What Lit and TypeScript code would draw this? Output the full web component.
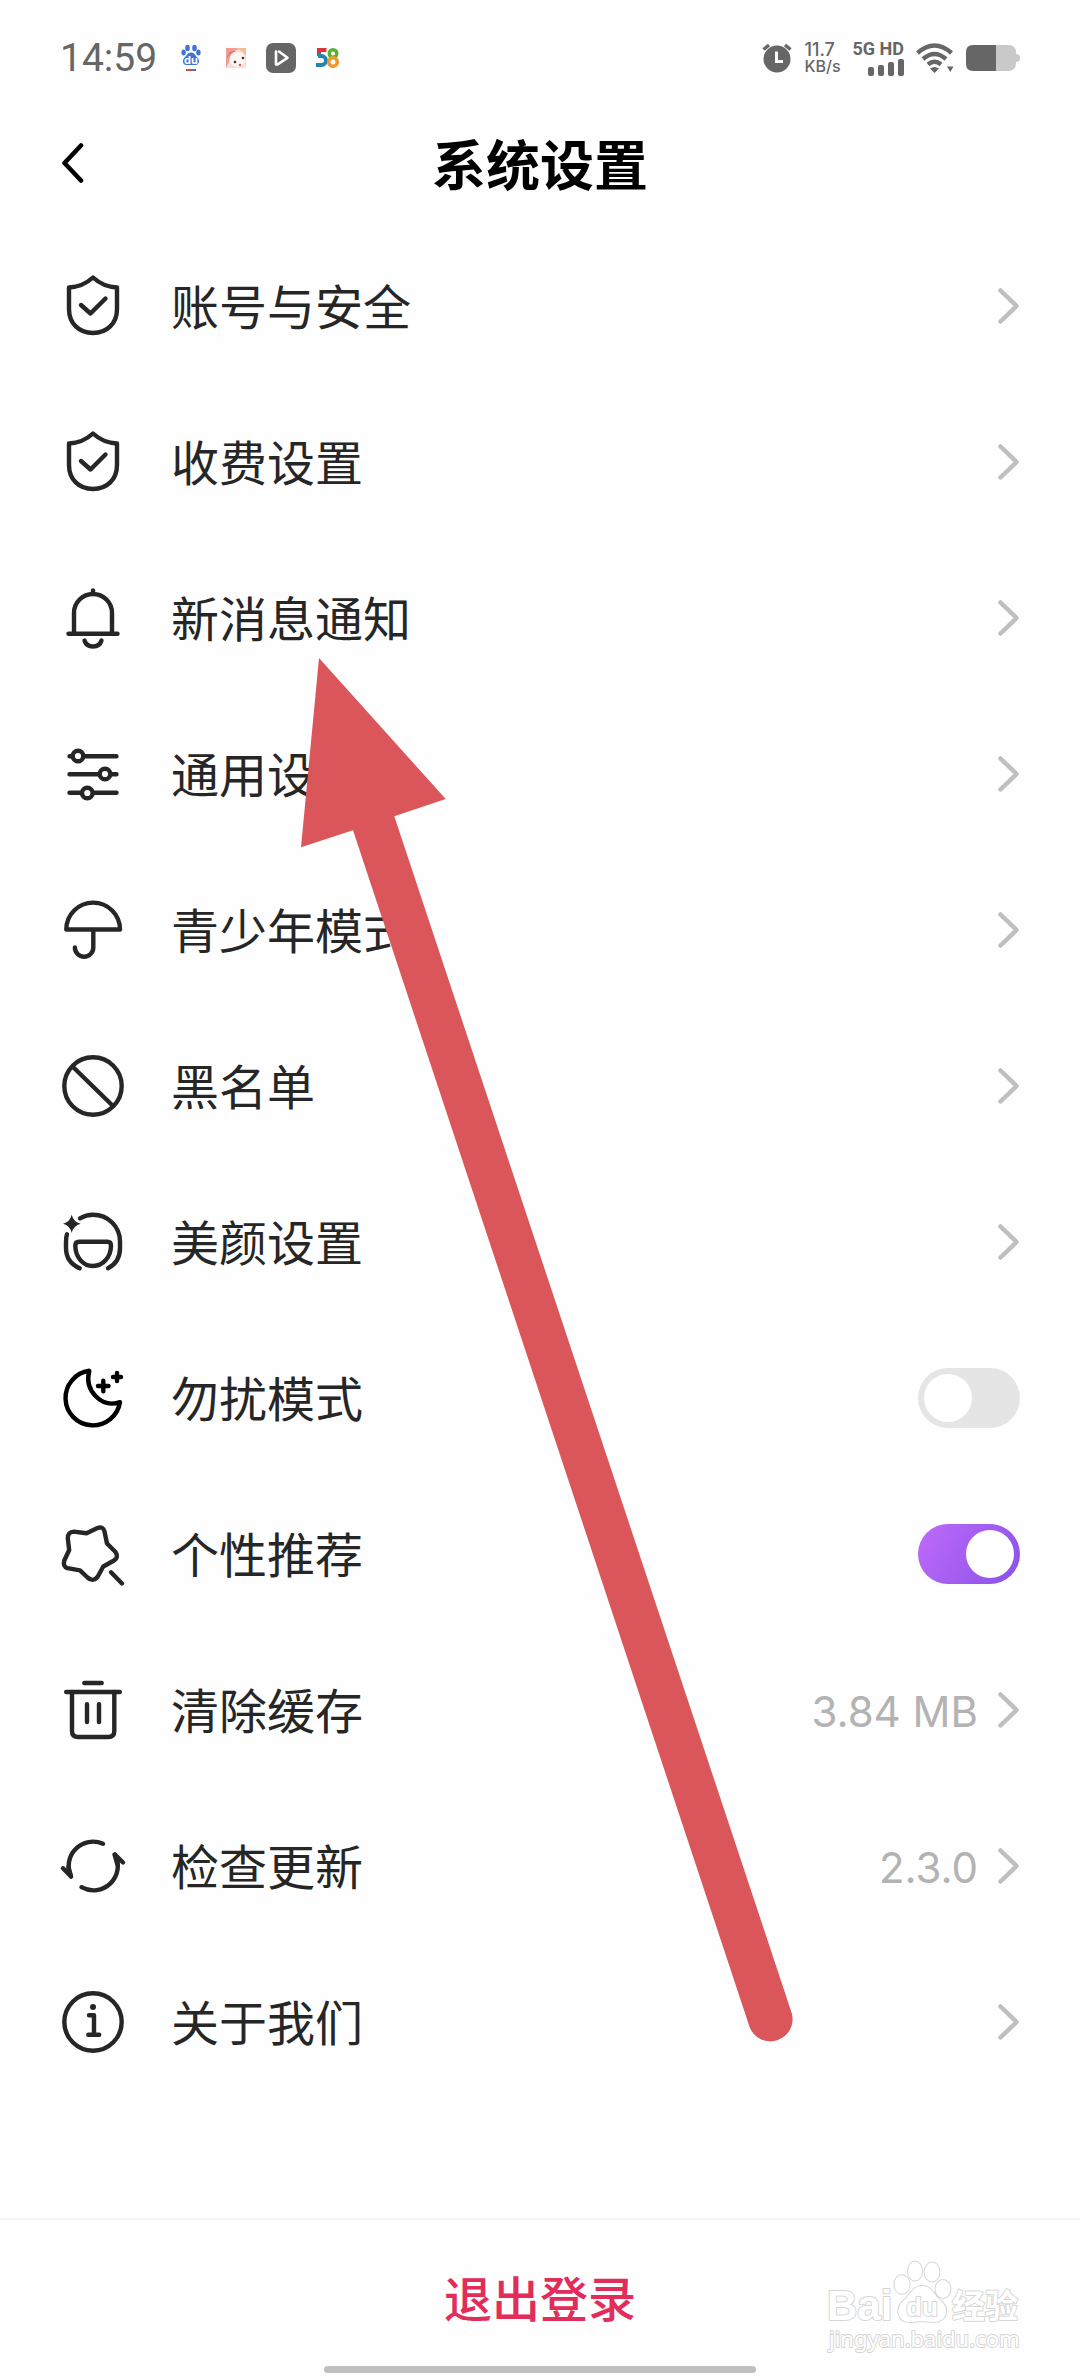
import { LitElement, css, html, svg, nothing } from "lit";
import type { SVGTemplateResult } from "lit";
import { customElement, property, state } from "lit/decorators.js";

type IconName =
  | "shield" | "bell" | "sliders" | "umbrella" | "ban" | "beauty"
  | "moon" | "star" | "trash" | "refresh" | "info";

const ICONS: Record<IconName, SVGTemplateResult> = {
  shield: svg`
    <path d="M36 7.5C30 13 21 17 12 17.5V39C12 53.5 22 63 36 63S60 53.5 60 39V17.5C51 17 42 13 36 7.5Z" />
    <path d="M24 35 33.5 43.5 48.5 28.5" />`,
  bell: svg`
    <path d="M36 8.5V11" />
    <path d="M17 51V31a19 19 0 0 1 38 0V51" />
    <path d="M11.5 51.7H60.5" />
    <path d="M27.5 58.5C30 66.5 42 66.5 44.5 58.5" />`,
  sliders: svg`
    <path d="M12.5 18.3H59.5M12.5 36.3H59.5M12.5 54.7H59.5" />
    <circle class="knob" cx="21" cy="18" r="5.3" />
    <circle class="knob" cx="48" cy="36" r="5.3" />
    <circle class="knob" cx="30.3" cy="55" r="5.3" />`,
  umbrella: svg`
    <path d="M9.3 35.5A26.8 26.8 0 0 1 63 35.5Z" />
    <path d="M36.3 36V53.5a9.2 9.2 0 0 1-18.4 0" />`,
  ban: svg`
    <circle cx="36" cy="36" r="28.7" />
    <path d="M16 17 56 56" />`,
  beauty: svg`
    <path class="solid" d="M14.7 8.7Q16.5 16 23.7 17.8Q16.5 19.5 14.7 27Q13 19.5 6 17.8Q13 16 14.7 8.7Z" />
    <path d="M23 12.3C27 10 31.5 8.7 36 8.7C51 8.7 63 20.5 63 35.5V42C63 51 58.5 58.5 51 62.3" />
    <path d="M10 28.3C9.2 30.5 9 33 9 36V42C9 51 14 58.5 22.7 62.3" />
    <path d="M22 35.7H50.5Q54 35.7 54 39.5C54 51 46 60 36 60S18.3 51 18.3 39.5Q18.3 35.7 22 35.7Z" />`,
  moon: svg`
    <path d="M32.3 8.8A27.4 27.4 0 1 0 63 40.2C53 43.5 45 40.5 39 34.5C32 27.5 29.5 19 32.3 8.8Z" />
    <path d="M41 24H51.5M46.3 18.7V29.3M56 15H64M60 11V19" />`,
  star: svg`
    <path d="M17 13.6 29.5 15.2 40.5 10Q46.3 8 47.5 13.5L50 25.5 58.5 34Q62 39.5 57 42.5L46.3 48.5 40.5 59Q36 64.5 30.5 59.5L23 52.3 10.5 50.2Q5.5 48.5 7.3 42.5L12.2 32 10.8 20.5Q10.5 13.8 17 13.6Z" />
    <path d="M54 54.3 65 65.5" />`,
  trash: svg`
    <path d="M27.3 9H44.7M9.2 18H62.8M30 30.3V48M42 30.3V48" />
    <path d="M15 18V57Q15 63 21 63H51.3Q57.3 63 57.3 57V18" />`,
  refresh: svg`
    <path d="M46 13.8A24.4 24.4 0 0 0 14 46.5L6 38.3" />
    <path d="M24.5 57.2A24.4 24.4 0 0 0 58 24.5L66 32.5" />
    <path d="M11.5 37 14 46.5M60.5 35 57.5 24.5" />`,
  info: svg`
    <circle cx="36" cy="36" r="28.7" />
    <circle class="solid" cx="36" cy="21" r="3" />
    <path d="M32 29.3H37V48.7M31.3 48.7H42.2" />`,
};

@customElement("setting-icon")
export class SettingIcon extends LitElement {
  @property() name: IconName = "shield";

  static styles = css`
    :host { display: block; width: 72px; height: 72px; flex: none; }
    svg { display: block; width: 100%; height: 100%; fill: none; stroke: currentColor; stroke-width: 4.4; stroke-linecap: round; stroke-linejoin: round; }
    .knob { fill: #fefefe; }
    .solid { fill: currentColor; stroke: none; }
  `;

  render() {
    return html`<svg viewBox="0 0 72 72" aria-hidden="true">${ICONS[this.name]}</svg>`;
  }
}

@customElement("status-bar")
export class StatusBar extends LitElement {
  static styles = css`
    :host { display: flex; align-items: center; justify-content: space-between; box-sizing: border-box; height: 98px; padding: 18px 60px 0; color: #666; font-family: Roboto, "Noto Sans CJK SC", sans-serif; }
    svg { display: block; flex: none; }
    .side { display: flex; align-items: center; }
    .time { margin-right: 24px; font-size: 39px; line-height: 48px; }
    .apps { display: flex; align-items: center; gap: 20px; }
    .right { gap: 12px; }
    .rate { display: flex; flex-direction: column; font: 500 18px/16px Inter, sans-serif; }
    .unit { font-size: 16px; }
    .cell { display: flex; flex-direction: column; align-items: flex-end; gap: 2px; font-size: 18px; line-height: 16px; font-weight: 700; }
    .tiny { font: 700 11px/12px Inter, sans-serif; }
  `;

  render() {
    return html`
      <div class="side">
        <span class="time">14:59</span>
        <div class="apps">
          <svg width="20" height="28" viewBox="0 0 20 28" aria-hidden="true">
            <g fill="#3f74d1">
              <ellipse cx="6.5" cy="4" rx="2.3" ry="3.2" /><ellipse cx="13.5" cy="4" rx="2.3" ry="3.2" />
              <ellipse cx="2.6" cy="8.5" rx="2.2" ry="3" /><ellipse cx="17.4" cy="8.5" rx="2.2" ry="3" />
              <path d="M10 8.5C13.5 8.5 14 11.5 16.5 13.5C19 16 18.5 21 14.5 21H5.5C1.5 21 1 16 3.5 13.5C6 11.5 6.5 8.5 10 8.5Z" />
            </g>
            <text class="tiny" x="10" y="19.5" text-anchor="middle" fill="#fff">du</text>
            <path d="M5 26H10" stroke="#c94a55" stroke-width="2" /><path d="M10 26H15" stroke="#4a72b8" stroke-width="2" />
          </svg>
          <svg width="25" height="20" viewBox="0 0 25 20" aria-hidden="true">
            <rect x="5" width="20" height="20" fill="#f7dfd8" />
            <path d="M5 0H22C14 1 9 6 8 14L5 20Z" fill="#ee9c92" />
            <path d="M14 0H25V8C22 3 18 1 14 0Z" fill="#f3bc8e" />
            <path d="M9 9C11 4 17 3 21 5S25 15 21 18C15 20 8 18 9 9Z" fill="#fff5f3" />
            <path d="M8 5 14 3M6 9 10 5" stroke="#d96b6b" />
            <circle cx="14" cy="14" r="1.3" fill="#333" /><circle cx="22" cy="10" r="1.3" fill="#333" />
            <circle cx="19" cy="17" r="1.3" fill="#e2606a" />
          </svg>
          <svg width="30" height="30" viewBox="0 0 30 30" aria-hidden="true">
            <rect width="30" height="30" rx="7" fill="#666" />
            <path d="M10 8.5V21.5M13 8.5 21.5 14.8 11.5 21.5" fill="none" stroke="#fff" stroke-width="2.6" stroke-linecap="round" stroke-linejoin="round" />
          </svg>
          <svg width="24" height="20" viewBox="0 0 24 20" fill="none" stroke-width="4" role="img" aria-label="58">
            <path d="M10.5 2H3V8" stroke="#d8363c" />
            <path d="M2 8H5.5A4.5 4.5 0 0 1 5.5 17H0" stroke="#2483b5" />
            <circle cx="17" cy="5.5" r="3.8" stroke="#57b32e" stroke-width="3.4" />
            <circle cx="17" cy="14" r="4.3" stroke="#ee9a2b" stroke-width="3.6" />
          </svg>
        </div>
      </div>
      <div class="side right">
        <svg width="30" height="30" viewBox="0 0 30 30" aria-hidden="true">
          <circle cx="15" cy="16" r="13.5" fill="#666" />
          <path d="M1.5 6.5 7 2M28.5 6.5 23 2" stroke="#666" stroke-width="3.5" />
          <path d="M14.5 8.5V18.5H21" fill="none" stroke="#fefefe" stroke-width="3" />
        </svg>
        <div class="rate"><span>11.7</span><span class="unit">KB/s</span></div>
        <div class="cell">
          <span>5G HD</span>
          <svg width="36" height="17" viewBox="0 0 36 17" fill="#666" aria-hidden="true">
            <rect x="0" y="8" width="6" height="9" rx="2" /><rect x="10" y="6" width="6" height="11" rx="2" />
            <rect x="20" y="3" width="6" height="14" rx="2" /><rect x="30" y="0" width="6" height="17" rx="2" />
          </svg>
        </div>
        <svg width="38" height="30" viewBox="0 0 38 30" aria-hidden="true">
          <g fill="none" stroke="#666" stroke-width="4.4">
            <path d="M1.5 10Q18.5-5 35.5 10" /><path d="M7 16Q18.5 6 30 16" /><path d="M12 21.5Q18.5 16 25 21.5" />
          </g>
          <path d="M14 25.5Q18.5 22.5 23 25.5L18.5 30ZM31 23.5H37.5L34.3 29Z" fill="#666" />
        </svg>
        <svg width="54" height="28" viewBox="0 0 54 28" aria-hidden="true">
          <path d="M30 1H42Q50 1 50 9V10Q54 10 54 14T50 18V19Q50 27 42 27H30Z" fill="#c9c9c9" />
          <path d="M7 1H30V27H7Q0 27 0 20V8Q0 1 7 1Z" fill="#666" />
        </svg>
      </div>`;
  }
}

interface Setting {
  icon: IconName;
  label: string;
  value?: string;
  toggle?: boolean;
  strong?: boolean;
}

@customElement("app-root")
export class AppRoot extends LitElement {
  @state() private items: Setting[] = [
    { icon: "shield", label: "账号与安全" },
    { icon: "shield", label: "收费设置" },
    { icon: "bell", label: "新消息通知" },
    { icon: "sliders", label: "通用设置" },
    { icon: "umbrella", label: "青少年模式" },
    { icon: "ban", label: "黑名单" },
    { icon: "beauty", label: "美颜设置" },
    { icon: "moon", label: "勿扰模式", toggle: false, strong: true },
    { icon: "star", label: "个性推荐", toggle: true },
    { icon: "trash", label: "清除缓存", value: "3.84 MB" },
    { icon: "refresh", label: "检查更新", value: "2.3.0" },
    { icon: "info", label: "关于我们" },
  ];

  static styles = css`
    :host { position: relative; display: flex; flex-direction: column; min-height: 100vh; overflow: hidden; background: #fefefe; color: #262626; font-family: "Noto Sans CJK SC", sans-serif; }
    header { display: grid; grid-template-columns: 60px 1fr 60px; align-items: center; height: 130px; padding: 0 44px; }
    button { border: 0; padding: 0; background: none; font: inherit; cursor: pointer; }
    .back { display: grid; place-items: center; height: 60px; color: #000; }
    h1 { margin: 0; text-align: center; color: #000; font-size: 54px; line-height: 64px; font-weight: 700; }
    main { flex: 1; }
    ul { margin: 0; padding: 0; list-style: none; }
    .row { display: flex; align-items: center; height: 156px; padding: 0 60px 0 57px; color: inherit; text-decoration: none; cursor: pointer; }
    .label { flex: 1; margin-left: 42px; padding-bottom: 4px; font-size: 48px; line-height: 64px; font-weight: 400; }
    .strong { color: #000; }
    .value { margin-right: 20px; padding-top: 4px; color: #b3b3b3; font: 400 42px/64px Inter, sans-serif; }
    .chevron { flex: none; display: block; }
    .switch { appearance: none; flex: none; box-sizing: border-box; width: 102px; height: 60px; margin: 0; padding: 6px; border-radius: 30px; background: #e5e5e5; display: flex; cursor: pointer; }
    .switch::before { content: ""; width: 48px; height: 48px; border-radius: 50%; background: #fff; }
    .switch:checked { justify-content: flex-end; background: linear-gradient(120deg, #be6af8, #8952ea); }
    footer { display: flex; border-top: 2px solid #f4f4f4; }
    .logout { flex: 1; height: 156px; padding-bottom: 4px; color: #e22c5a; font-size: 48px; line-height: 64px; font-weight: 500; }
    .home { position: absolute; left: 30%; right: 30%; bottom: 3px; height: 7px; border-radius: 4px; background: #c0c0c0; }
    .pointer { position: absolute; left: 300px; top: 658px; fill: #db565a; pointer-events: none; }
    .mark { position: absolute; right: 46px; bottom: 16px; pointer-events: none; fill: #fff; stroke: #d6d6d6; stroke-width: 2; paint-order: stroke; stroke-linejoin: round; }
    .brand { font: 700 42px "Liberation Sans", sans-serif; }
    .inner { font: 700 26px "Liberation Sans", sans-serif; }
    .topic { font: 700 33px "Noto Sans CJK SC", sans-serif; }
    .site { font: 400 22px "Noto Sans", sans-serif; }
  `;

  private setToggle(index: number, event: Event) {
    const checked = (event.target as HTMLInputElement).checked;
    this.items = this.items.map((item, i) => (i === index ? { ...item, toggle: checked } : item));
  }

  private renderRow(item: Setting, index: number) {
    const lead = html`
      <setting-icon class=${item.strong ? "strong" : ""} .name=${item.icon}></setting-icon>
      <span class="label">${item.label}</span>`;
    if (item.toggle !== undefined) {
      return html`<li><label class="row">${lead}
        <input class="switch" type="checkbox" role="switch" .checked=${item.toggle}
          @change=${(e: Event) => this.setToggle(index, e)} />
      </label></li>`;
    }
    return html`<li><a class="row" href="#">${lead}
      ${item.value ? html`<span class="value">${item.value}</span>` : nothing}
      <svg class="chevron" width="22" height="36" viewBox="0 0 22 36" fill="none" stroke="#bfbfbf" stroke-width="4.5" stroke-linecap="round" stroke-linejoin="round" aria-hidden="true">
        <path d="M2.5 2.5 18.5 18 2.5 33.5" />
      </svg>
    </a></li>`;
  }

  render() {
    return html`
      <status-bar></status-bar>
      <header>
        <button class="back" aria-label="返回">
          <svg width="24" height="40" viewBox="0 0 24 40" fill="none" stroke="currentColor" stroke-width="4.5" stroke-linecap="round" stroke-linejoin="round">
            <path d="M19 2.5 2.5 20 19 37.5" />
          </svg>
        </button>
        <h1>系统设置</h1>
      </header>
      <main><ul>${this.items.map((item, i) => this.renderRow(item, i))}</ul></main>
      <footer><button class="logout">退出登录</button></footer>
      <svg class="pointer" width="494" height="1386" viewBox="0 0 494 1386" aria-hidden="true">
        <path d="M19 0 145.7 141 94.3 158.3 491.7 1355A22.2 22.2 0 0 1 449.6 1369L53 172.3 1 189.3Z" />
      </svg>
      <svg class="mark" width="208" height="100" viewBox="0 0 208 100" aria-hidden="true">
        <text class="brand" x="1" y="60">Bai</text>
        <ellipse cx="76" cy="24.5" rx="7.5" ry="9.5" /><ellipse cx="89" cy="11" rx="7" ry="9.5" />
        <ellipse cx="106" cy="12" rx="7.5" ry="9.5" /><ellipse cx="117" cy="29" rx="7.5" ry="9" />
        <path d="M96 26C106 26 107 34 114 40C125 49 120 63 107 62C100 61 92 61 85 62C72 63 68 49 78 40C85 34 87 26 96 26Z" />
        <text class="inner" x="80" y="56">du</text>
        <text class="topic" x="126" y="58">经验</text>
        <text class="site" x="3" y="87">jingyan.baidu.com</text>
      </svg>
      <div class="home"></div>`;
  }
}
